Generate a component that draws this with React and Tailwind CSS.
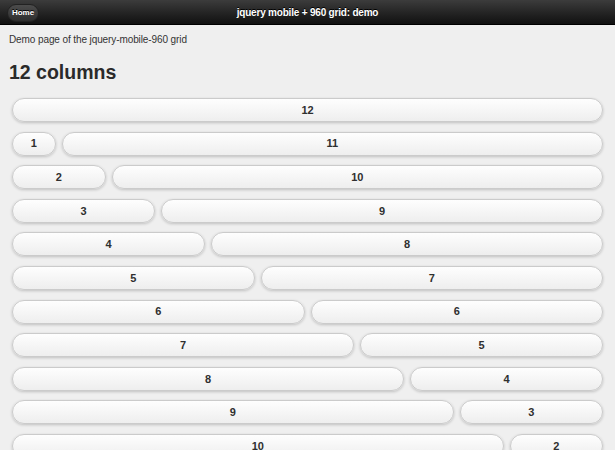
const rows = [[12], [1, 11], [2, 10], [3, 9], [4, 8], [5, 7], [6, 6], [7, 5], [8, 4], [9, 3], [10, 2], [11, 1]];

const spans = {
  1: 'col-span-1',
  2: 'col-span-2',
  3: 'col-span-3',
  4: 'col-span-4',
  5: 'col-span-5',
  6: 'col-span-6',
  7: 'col-span-7',
  8: 'col-span-8',
  9: 'col-span-9',
  10: 'col-span-10',
  11: 'col-span-11',
  12: 'col-span-12',
};

function GridButton({ n }) {
  return (
    <button
      className={`${spans[n]} h-[24px] rounded-full border border-[#cbcbcb] bg-gradient-to-b from-[#fefefe] to-[#eeeeee] text-[11px] font-bold text-[#2f2f2f] shadow-[0_1px_3px_rgba(0,0,0,0.2)]`}
    >
      {n}
    </button>
  );
}

export default function App() {
  return (
    <div className="min-h-[450px] bg-[#efefef] font-['Liberation_Sans',Arial,sans-serif]">
      <header className="relative flex h-[25px] items-center justify-center border-b border-black bg-gradient-to-b from-[#3c3c3c] to-[#111111]">
        <button className="absolute left-[7px] top-[4px] h-[18px] w-[32px] rounded-full border border-[#222] bg-gradient-to-b from-[#4c4c4c] to-[#2e2e2e] text-[8px] font-bold text-white [text-shadow:0_-1px_0_#000]">
          Home
        </button>
        <h1 className="text-[10px] font-bold tracking-[-0.2px] text-white [text-shadow:0_-1px_0_#000]">
          jquery mobile + 960 grid: demo
        </h1>
      </header>

      <main className="px-[9px] pt-[8px]">
        <p className="text-[10px] leading-[14px] tracking-[-0.1px] text-[#333]">Demo page of the jquery-mobile-960 grid</p>
        <h2 className="mt-[13px] text-[19.5px] font-bold leading-[24px] text-[#2a2a2a]">12 columns</h2>

        <div className="mt-[14px] grid grid-cols-12 gap-x-[6px] gap-y-[9.6px] px-[3px]">
          {rows.map((row, i) => row.map((n, j) => <GridButton key={`${i}-${j}`} n={n} />))}
        </div>
      </main>
    </div>
  );
}
